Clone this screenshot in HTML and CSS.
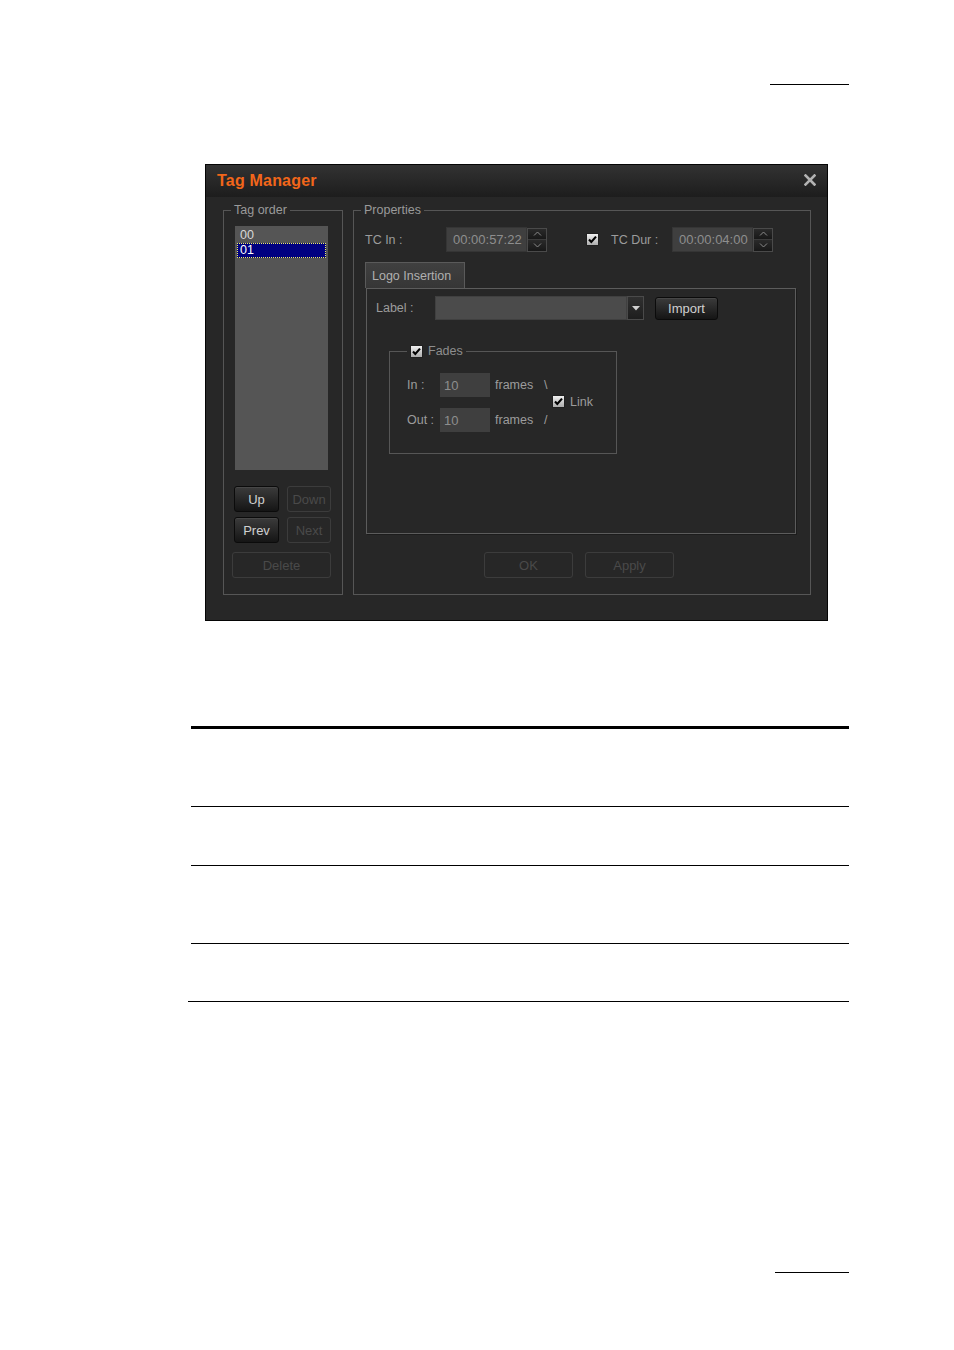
FILE: index.html
```html
<!DOCTYPE html>
<html>
<head>
<meta charset="utf-8">
<title>Tag Manager</title>
<link rel="stylesheet" href="styles.css">
</head>
<body>
<div class="page">
  <div class="rule-top"></div>

  <div class="dialog">
    <div class="titlebar">
      <span class="title">Tag Manager</span>
      <svg class="close" width="12" height="12" viewBox="0 0 12 12"><path d="M1.5 1.5 L10.5 10.5 M10.5 1.5 L1.5 10.5" stroke="#b2b2b2" stroke-width="2.6" stroke-linecap="square"/></svg>
    </div>

    <div class="dlg-body">
      <div class="group group-tags">
        <div class="legend">Tag order</div>
        <div class="listbox">
          <div class="item">00</div>
          <div class="item sel">01</div>
        </div>
        <div class="btn-row r1">
          <div class="btn on w45">Up</div>
          <div class="btn off w44">Down</div>
        </div>
        <div class="btn-row r2">
          <div class="btn on w45">Prev</div>
          <div class="btn off w44">Next</div>
        </div>
        <div class="btn-row r3">
          <div class="btn off w99">Delete</div>
        </div>
      </div>

      <div class="group group-props">
        <div class="legend">Properties</div>
        <div class="tc-row">
          <span class="lbl w81">TC In :</span>
          <div class="field">00:00:57:22</div>
          <div class="spin">
            <div class="spin-half"><svg width="9" height="5" viewBox="0 0 9 5"><path d="M1 4.5 L4.5 1 L8 4.5" fill="none" stroke="#8a8a8a" stroke-width="1"/></svg></div>
            <div class="spin-half"><svg width="9" height="5" viewBox="0 0 9 5"><path d="M1 0.5 L4.5 4 L8 0.5" fill="none" stroke="#8a8a8a" stroke-width="1"/></svg></div>
          </div>
          <svg class="chk chk-tc" width="13" height="13" viewBox="0 0 13 13"><defs><linearGradient id="cg1" x1="0" y1="0" x2="0" y2="1"><stop offset="0" stop-color="#f4f4f4"/><stop offset="1" stop-color="#a9a9a9"/></linearGradient></defs><rect x="0.5" y="0.5" width="12" height="12" fill="url(#cg1)" stroke="#202020"/><path d="M3 6.5 L5.3 9 L10 3.6" fill="none" stroke="#000" stroke-width="2.1"/></svg>
          <span class="lbl lbl-dur">TC Dur :</span>
          <div class="field">00:00:04:00</div>
          <div class="spin">
            <div class="spin-half"><svg width="9" height="5" viewBox="0 0 9 5"><path d="M1 4.5 L4.5 1 L8 4.5" fill="none" stroke="#8a8a8a" stroke-width="1"/></svg></div>
            <div class="spin-half"><svg width="9" height="5" viewBox="0 0 9 5"><path d="M1 0.5 L4.5 4 L8 0.5" fill="none" stroke="#8a8a8a" stroke-width="1"/></svg></div>
          </div>
        </div>

        <div class="tab">Logo Insertion</div>
        <div class="panel">
          <div class="label-row">
            <span class="lbl w59">Label :</span>
            <div class="combo"></div>
            <div class="drop"><svg width="8" height="5" viewBox="0 0 8 5"><path d="M0 0 L8 0 L4 4.5 Z" fill="#d0d0d0"/></svg></div>
            <div class="btn on import">Import</div>
          </div>

          <div class="group fades">
            <div class="legend">
              <svg class="chk" width="13" height="13" viewBox="0 0 13 13"><defs><linearGradient id="cg2" x1="0" y1="0" x2="0" y2="1"><stop offset="0" stop-color="#f4f4f4"/><stop offset="1" stop-color="#a9a9a9"/></linearGradient></defs><rect x="0.5" y="0.5" width="12" height="12" fill="url(#cg2)" stroke="#202020"/><path d="M3 6.5 L5.3 9 L10 3.6" fill="none" stroke="#000" stroke-width="2.1"/></svg>
              <span>Fades</span>
            </div>
            <div class="fades-body">
              <div class="fade-rows">
                <div class="fade-row">
                  <span class="lbl w33">In :</span>
                  <div class="num">10</div>
                  <span class="lbl frames">frames</span>
                  <span class="lbl slash">\</span>
                </div>
                <div class="fade-row">
                  <span class="lbl w33">Out :</span>
                  <div class="num">10</div>
                  <span class="lbl frames">frames</span>
                  <span class="lbl slash">/</span>
                </div>
              </div>
              <div class="link">
                <svg class="chk" width="13" height="13" viewBox="0 0 13 13"><defs><linearGradient id="cg3" x1="0" y1="0" x2="0" y2="1"><stop offset="0" stop-color="#f4f4f4"/><stop offset="1" stop-color="#a9a9a9"/></linearGradient></defs><rect x="0.5" y="0.5" width="12" height="12" fill="url(#cg3)" stroke="#202020"/><path d="M3 6.5 L5.3 9 L10 3.6" fill="none" stroke="#000" stroke-width="2.1"/></svg>
                <span class="lbl">Link</span>
              </div>
            </div>
          </div>
        </div>

        <div class="ok-row">
          <div class="btn off w89">OK</div>
          <div class="btn off w89">Apply</div>
        </div>
      </div>
    </div>
  </div>

  <div class="tbl">
    <div class="tbl-top"></div>
    <div class="row h78"></div>
    <div class="row h59"></div>
    <div class="row h78"></div>
    <div class="row h58 wide"></div>
  </div>

  <div class="rule-bottom"></div>
</div>
</body>
</html>
```

FILE: styles.css
```css
* { box-sizing: border-box; }

body {
  margin: 0;
  background: #ffffff;
  font-family: "Liberation Sans", Arial, sans-serif;
}

.page {
  padding-top: 84px;
}

.rule-top {
  margin-left: 770px;
  width: 79px;
  height: 1px;
  background: #000;
}

/* ---------- dialog ---------- */
.dialog {
  margin: 79px 0 0 205px;
  width: 623px;
  height: 457px;
  border: 1px solid #050505;
  background: #272727;
  display: flex;
  flex-direction: column;
}

.titlebar {
  height: 32px;
  flex: none;
  background: linear-gradient(#323232, #1d1d1d);
  display: flex;
  align-items: center;
  justify-content: space-between;
  padding: 0 11px 0 11px;
}

.title {
  font-size: 16px;
  font-weight: bold;
  color: #f2661a;
  letter-spacing: 0.2px;
  margin-top: -1px;
}

.close { display: block; margin-top: -2px; }

.dlg-body {
  display: flex;
  gap: 10px;
  padding: 13px 16px 0 17px;
}

.group {
  border: 1px solid #565656;
}

.group-tags { width: 120px; height: 385px; }
.group-props { width: 458px; height: 385px; }

.legend {
  width: max-content;
  height: 14px;
  margin: -8px 0 0 7px;
  padding: 0 3px;
  background: #272727;
  font-size: 12.5px;
  line-height: 14px;
  color: #9a9a9a;
  display: flex;
  align-items: center;
  gap: 5px;
}

.lbl {
  font-size: 12.5px;
  color: #9c9c9c;
  white-space: nowrap;
  flex: none;
}

.w33 { width: 33px; }
.w59 { width: 59px; }
.w81 { width: 81px; }

/* list */
.listbox {
  margin: 9px 0 0 11px;
  width: 93px;
  height: 244px;
  background: #555555;
  padding-top: 2px;
}

.item {
  margin: 0 2px;
  height: 15px;
  line-height: 15px;
  padding-left: 3px;
  font-size: 12.5px;
  color: #d8d8d8;
}

.item.sel {
  background: #000080;
  color: #ffffff;
  outline: 1px dotted #f0f060;
  outline-offset: -1px;
}

/* buttons */
.btn-row { display: flex; gap: 8px; margin-left: 10px; }
.btn-row.r1 { margin-top: 16px; }
.btn-row.r2 { margin-top: 5px; }
.btn-row.r3 { margin-top: 9px; margin-left: 8px; }

.btn {
  height: 26px;
  display: flex;
  align-items: center;
  justify-content: center;
  font-size: 13px;
  border-radius: 3px;
  flex: none;
}

.btn.on {
  background: linear-gradient(#3b3b3b, #151515);
  border: 1px solid #0b0b0b;
  color: #d0d0d0;
  box-shadow: inset 0 1px 0 #474747;
}

.btn.off {
  border: 1px solid #3c3c3c;
  color: #4a4a4a;
}

.w44 { width: 44px; }
.w45 { width: 45px; }
.w89 { width: 89px; }
.w99 { width: 99px; }

/* TC row */
.tc-row {
  display: flex;
  align-items: center;
  height: 25px;
  margin: 10px 0 0 11px;
}

.field {
  width: 81px;
  height: 25px;
  background: #3f3f3f;
  border: 1px solid #353535;
  color: #8e8e8e;
  font-size: 13px;
  padding-left: 6px;
  display: flex;
  align-items: center;
  flex: none;
}

.spin {
  width: 20px;
  height: 24px;
  border: 1px solid #4a4a4a;
  background: #1c1c1c;
  display: flex;
  flex-direction: column;
  flex: none;
}

.spin-half {
  flex: 1;
  display: flex;
  align-items: center;
  justify-content: center;
  background: linear-gradient(#2a2a2a, #181818);
}

.spin-half + .spin-half { border-top: 1px solid #3c3c3c; }

.spin svg { display: block; }

.chk { display: block; flex: none; }
.chk-tc { margin-left: 39px; }

.lbl-dur { margin-left: 12px; width: 61px; }

/* tab + panel */
.tab {
  margin: 10px 0 0 11px;
  width: 100px;
  height: 26px;
  background: linear-gradient(#404040, #363636);
  border: 1px solid #5a5a5a;
  border-bottom: none;
  color: #b0b0b0;
  font-size: 12.5px;
  padding-left: 6px;
  display: flex;
  align-items: center;
}

.panel {
  margin-left: 12px;
  width: 430px;
  height: 246px;
  border: 1px solid #5c5c5c;
  box-shadow: 1px 1px 0 #1c1c1c;
}

.label-row {
  display: flex;
  align-items: center;
  margin: 7px 0 0 9px;
}

.combo {
  width: 192px;
  height: 24px;
  background: #4b4b4b;
  border: 1px solid #404040;
  flex: none;
}

.drop {
  width: 17px;
  height: 24px;
  background: linear-gradient(#303030, #1e1e1e);
  border: 1px solid #4a4a4a;
  display: flex;
  align-items: center;
  justify-content: center;
  flex: none;
}

.drop svg { display: block; }

.import {
  margin-left: 11px;
  width: 63px;
  height: 23px;
  color: #b4b4b4;
}

/* fades */
.fades {
  margin: 31px 0 0 22px;
  width: 228px;
  height: 103px;
}

.fades .legend { margin-left: 17px; color: #8e8e8e; }

.fades-body {
  display: flex;
  align-items: center;
  margin: 15px 0 0 17px;
}

.fade-rows { display: flex; flex-direction: column; gap: 11px; }

.fade-row { display: flex; align-items: center; height: 24px; }

.num {
  width: 50px;
  height: 24px;
  background: #3f3f3f;
  color: #8e8e8e;
  font-size: 13px;
  padding-left: 4px;
  display: flex;
  align-items: center;
  flex: none;
}

.frames { margin-left: 5px; width: 49px; }
.slash { width: 8px; }

.link {
  display: flex;
  align-items: center;
  gap: 5px;
  margin-top: -2px;
}

/* OK row */
.ok-row {
  display: flex;
  gap: 12px;
  margin: 18px 0 0 130px;
}

/* ---------- table rules ---------- */
.tbl {
  margin: 105px 0 0 191px;
  width: 658px;
}

.tbl-top { height: 3px; background: #000; }

.row { border-bottom: 1px solid #000; }
.h78 { height: 78px; }
.h59 { height: 59px; }
.h58 { height: 58px; }
.row.wide { margin-left: -3px; width: 661px; }

.rule-bottom {
  margin: 270px 0 0 775px;
  width: 74px;
  height: 1px;
  background: #000;
}
```
